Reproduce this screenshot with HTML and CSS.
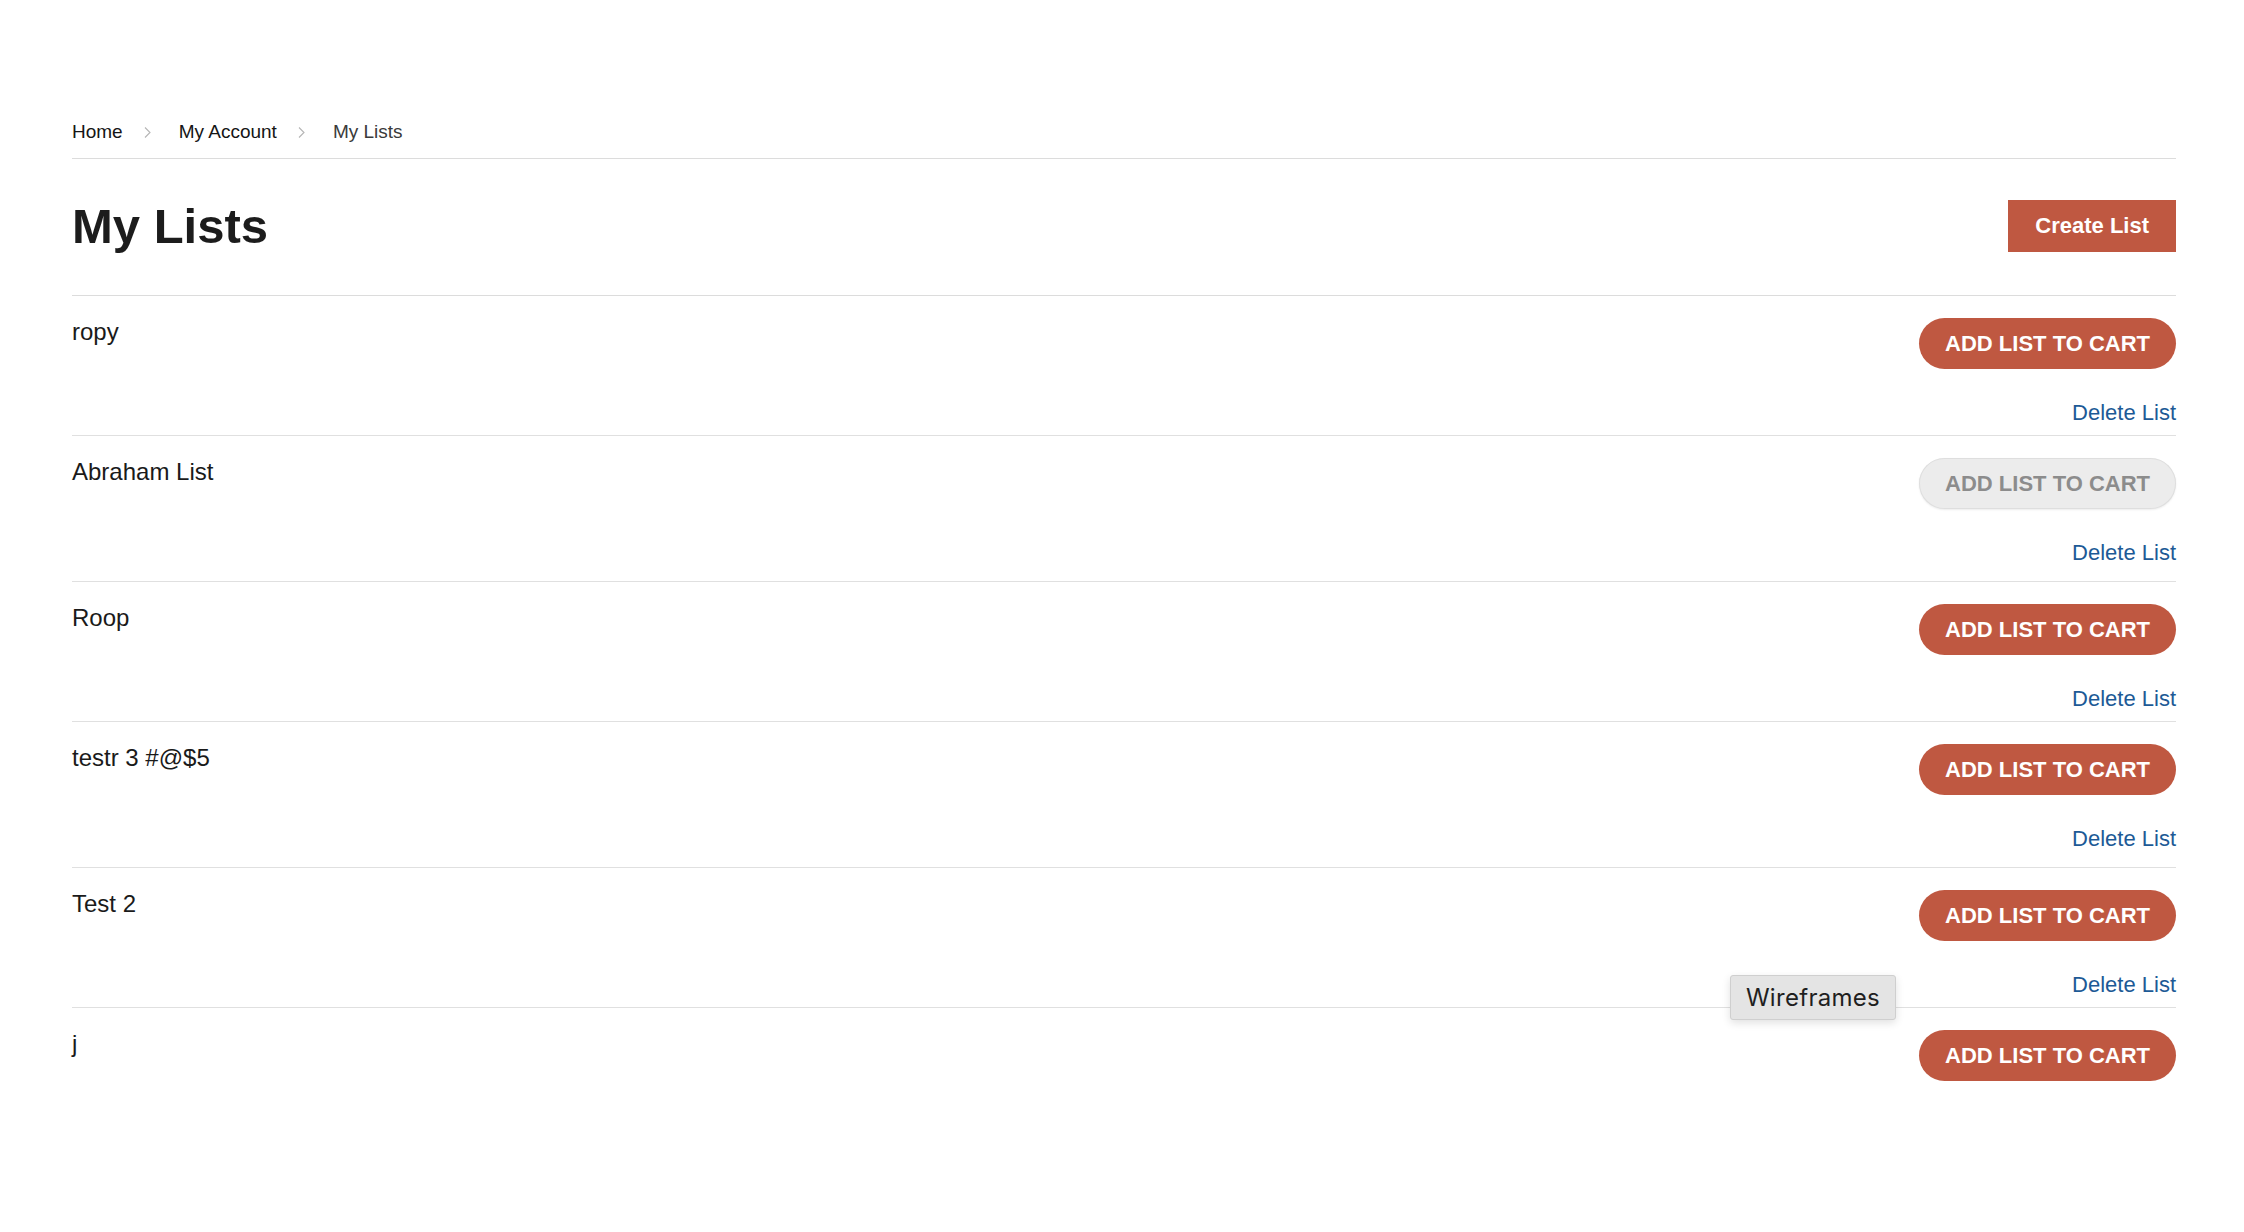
FILE: index.html
```html
<!DOCTYPE html>
<html lang="en">
<head>
<meta charset="utf-8">
<title>My Lists</title>
<link rel="stylesheet" href="styles.css">
</head>
<body>
<div class="page">
  <nav class="breadcrumb">
    <a class="crumb" href="#">Home</a>
    <svg class="sep" width="7" height="11" viewBox="0 0 7 11"><polyline points="1,0.5 6,5.5 1,10.5" fill="none" stroke="#b5b5b5" stroke-width="1.1"/></svg>
    <a class="crumb" href="#">My Account</a>
    <svg class="sep" width="7" height="11" viewBox="0 0 7 11"><polyline points="1,0.5 6,5.5 1,10.5" fill="none" stroke="#b5b5b5" stroke-width="1.1"/></svg>
    <span class="crumb current">My Lists</span>
  </nav>

  <header class="page-head">
    <h1 class="title">My Lists</h1>
    <button class="btn-create">Create List</button>
  </header>

  <ul class="lists">
    <li class="list-row">
      <span class="list-name">ropy</span>
      <div class="list-actions">
        <button class="btn-cart">ADD LIST TO CART</button>
        <a class="delete" href="#">Delete List</a>
      </div>
    </li>
    <li class="list-row">
      <span class="list-name">Abraham List</span>
      <div class="list-actions">
        <button class="btn-cart disabled" disabled>ADD LIST TO CART</button>
        <a class="delete" href="#">Delete List</a>
      </div>
    </li>
    <li class="list-row">
      <span class="list-name">Roop</span>
      <div class="list-actions">
        <button class="btn-cart">ADD LIST TO CART</button>
        <a class="delete" href="#">Delete List</a>
      </div>
    </li>
    <li class="list-row">
      <span class="list-name">testr 3 #@$5</span>
      <div class="list-actions">
        <button class="btn-cart">ADD LIST TO CART</button>
        <a class="delete" href="#">Delete List</a>
      </div>
    </li>
    <li class="list-row">
      <span class="list-name">Test 2</span>
      <div class="list-actions">
        <button class="btn-cart">ADD LIST TO CART</button>
        <a class="delete" href="#">Delete List</a>
      </div>
    </li>
    <li class="list-row last">
      <span class="list-name">j</span>
      <div class="list-actions">
        <button class="btn-cart">ADD LIST TO CART</button>
      </div>
    </li>
  </ul>
</div>
<div class="tooltip">Wireframes</div>
</body>
</html>
```

FILE: styles.css
```css
html, body {
  margin: 0;
  padding: 0;
  background: #ffffff;
}

body {
  position: relative;
  min-height: 1232px;
  font-family: "Liberation Sans", Arial, Helvetica, sans-serif;
  color: #1a1a1a;
  overflow: hidden;
}

.page {
  padding: 121px 68px 0 72px;
}

/* Breadcrumb */
.breadcrumb {
  display: flex;
  align-items: center;
  font-size: 19px;
  line-height: 22px;
  padding-bottom: 15px;
  border-bottom: 1px solid #dcdcdc;
}

.crumb {
  color: #151515;
  text-decoration: none;
}

.crumb.current {
  color: #3a3a3a;
}

.sep {
  display: block;
  margin: 1px 28px 0 21px;
}

/* Header */
.page-head {
  display: flex;
  align-items: center;
  justify-content: space-between;
  padding: 41px 0 43px;
  border-bottom: 1px solid #dcdcdc;
}

.title {
  margin: 0;
  font-size: 49px;
  line-height: 1;
  font-weight: 700;
  color: #1c1c1c;
}

.btn-create {
  height: 52px;
  padding: 0 27px;
  border: none;
  border-radius: 0;
  background: #bf5841;
  color: #ffffff;
  font-family: "Liberation Sans", Arial, sans-serif;
  font-size: 22px;
  font-weight: 700;
  cursor: pointer;
}

/* Lists */
.lists {
  list-style: none;
  margin: 0;
  padding: 0;
}

.list-row {
  display: flex;
  justify-content: space-between;
  align-items: flex-start;
  padding: 22px 0 10px;
  border-bottom: 1px solid #e0e0e0;
}

.list-row:nth-child(even) {
  padding-bottom: 16px;
}

.list-row.last {
  border-bottom: none;
}

.list-name {
  font-size: 24px;
  color: #1a1a1a;
}

.list-actions {
  display: flex;
  flex-direction: column;
  align-items: flex-end;
  gap: 31px;
}

.btn-cart {
  height: 51px;
  padding: 0 26px;
  border: none;
  border-radius: 26px;
  background: #bf5841;
  color: #ffffff;
  font-family: "Liberation Sans", Arial, sans-serif;
  font-size: 22px;
  font-weight: 700;
  white-space: nowrap;
  cursor: pointer;
}

.btn-cart.disabled {
  background: #ececec;
  color: #8c8c8c;
  box-shadow: inset 0 0 0 1px #dedede, 0 1px 2px rgba(0, 0, 0, 0.08);
  cursor: default;
}

.delete {
  font-size: 22px;
  line-height: 25px;
  color: #1d5a96;
  text-decoration: none;
}

/* Overlay tooltip */
.tooltip {
  position: absolute;
  left: 1730px;
  top: 975px;
  width: 166px;
  height: 45px;
  box-sizing: border-box;
  display: flex;
  align-items: center;
  justify-content: center;
  background: #e4e4e4;
  border: 1px solid #cfcfcf;
  border-radius: 3px;
  box-shadow: 0 3px 8px rgba(0, 0, 0, 0.12);
  font-family: Inter, "Open Sans", sans-serif;
  font-size: 24px;
  letter-spacing: 0.3px;
  color: #1f1f1f;
}
```
